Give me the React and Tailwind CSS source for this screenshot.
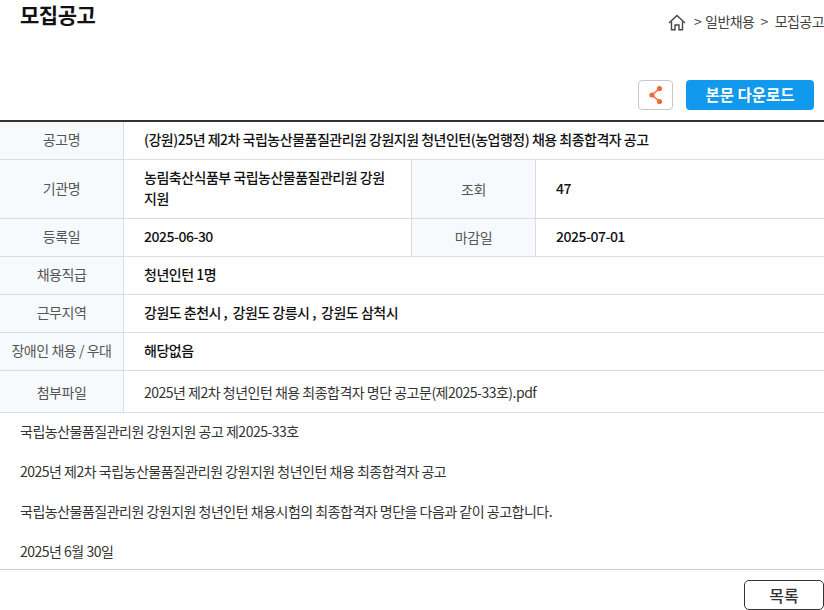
const font = { fontFamily: '"Noto Sans CJK KR", "Noto Sans", sans-serif' };

function HomeIcon() {
  return (
    <svg width="18" height="17" viewBox="0 0 18 17" fill="none" stroke="#444" strokeWidth="1.4" className="mt-[3px] mr-[8px]">
      <path d="M1 9 L9 1.5 L17 9" />
      <path d="M3.5 7.5 V15.8 H7 V11 H11 V15.8 H14.5 V7.5" />
    </svg>
  );
}

function ShareIcon() {
  return (
    <svg width="14" height="20" viewBox="0 0 14 20" fill="#ee6c36" stroke="#ee6c36">
      <path d="M10.5 3.5 L3 10 L10.5 16.5" fill="none" strokeWidth="1.5" />
      <circle cx="10.5" cy="3.5" r="2.6" stroke="none" />
      <circle cx="3" cy="10" r="2.6" stroke="none" />
      <circle cx="10.5" cy="16.5" r="2.6" stroke="none" />
    </svg>
  );
}

function Label({ children, className = "pb-[2px]" }) {
  return (
    <div className={`flex shrink-0 items-center justify-center bg-[#f7fafd] text-[14px] tracking-[-0.45px] text-[#555] ${className}`}>
      {children}
    </div>
  );
}

function Row({ label, children, className = "h-[38px]", labelClass = "pb-[2px]" }) {
  return (
    <div className={`flex border-b border-[#dcdcdc] ${className}`}>
      <Label className={`w-[124px] border-r border-[#dcdcdc] ${labelClass}`}>{label}</Label>
      {children}
    </div>
  );
}

function Value({ children, className = "flex-1" }) {
  return (
    <div className={`flex items-center px-5 pb-[2px] text-[14px] leading-[21px] font-medium tracking-[-0.5px] text-[#111] ${className}`}>
      {children}
    </div>
  );
}

export default function App() {
  return (
    <div className="h-[610px] w-[824px] overflow-hidden bg-white" style={font}>
      {/* 상단 */}
      <div className="flex h-[80px] items-start justify-between pl-5">
        <h1 className="text-[21px] leading-[28px] font-bold tracking-[-0.5px] text-[#111]">모집공고</h1>
        <div className="mt-[11px] flex items-start whitespace-nowrap text-[14px] leading-[20px] tracking-[-0.55px] text-[#444]">
          <HomeIcon />
          <span className="mr-[3px]">&gt;</span>
          <span className="ml-[1px]">일반채용</span>
          <span className="ml-[6px]">&gt;</span>
          <span className="ml-[7px]">모집공고</span>
        </div>
      </div>

      <div className="flex h-[40px] items-start justify-end gap-[13px] pr-[10px]">
        <button className="flex h-[30px] w-[35px] items-center justify-center rounded-[4px] border border-[#c8c8c8] bg-white">
          <ShareIcon />
        </button>
        <button className="h-[30px] w-[128px] rounded-[4px] bg-[#1199ee] text-[15.5px] font-bold text-white">본문 다운로드</button>
      </div>

      {/* 공고 정보 */}
      <div className="border-t-2 border-[#333]">
        <Row label="공고명">
          <Value>(강원)25년 제2차 국립농산물품질관리원 강원지원 청년인턴(농업행정) 채용 최종합격자 공고</Value>
        </Row>
        <Row label="기관명" className="h-[59px]">
          <Value className="w-[287px]">농림축산식품부 국립농산물품질관리원 강원지원</Value>
          <Label className="w-[125px] border-x border-[#dcdcdc]">조회</Label>
          <Value>47</Value>
        </Row>
        <Row label="등록일">
          <Value className="w-[287px]">2025-06-30</Value>
          <Label className="w-[125px] border-x border-[#dcdcdc]">마감일</Label>
          <Value>2025-07-01</Value>
        </Row>
        <Row label="채용직급">
          <Value>청년인턴 1명</Value>
        </Row>
        <Row label="근무지역">
          <Value>강원도 춘천시 ,&nbsp; 강원도 강릉시 ,&nbsp; 강원도 삼척시</Value>
        </Row>
        <Row label="장애인 채용 / 우대">
          <Value>해당없음</Value>
        </Row>
        <Row label="첨부파일" className="h-[42px]" labelClass="pt-[1px]">
          <div className="flex flex-1 items-center px-5 pt-[1px] text-[14px] tracking-[-0.5px] text-[#333]">
            2025년 제2차 청년인턴 채용 최종합격자 명단 공고문(제2025-33호).pdf
          </div>
        </Row>
      </div>

      {/* 본문 */}
      <div className="flex h-[157px] flex-col gap-[19px] border-b border-[#cfcfcf] px-5 pt-[8px] text-[14px] leading-[21px] tracking-[-0.5px] text-[#333]">
        <p>국립농산물품질관리원 강원지원 공고 제2025-33호</p>
        <p>2025년 제2차 국립농산물품질관리원 강원지원 청년인턴 채용 최종합격자 공고</p>
        <p>국립농산물품질관리원 강원지원 청년인턴 채용시험의 최종합격자 명단을 다음과 같이 공고합니다.</p>
        <p>2025년 6월 30일</p>
      </div>

      <div className="flex justify-end pt-[10px]">
        <button className="h-[30px] w-[80px] rounded-[5px] border border-[#333] bg-white text-[16px] font-medium text-[#333]">목록</button>
      </div>
    </div>
  );
}
